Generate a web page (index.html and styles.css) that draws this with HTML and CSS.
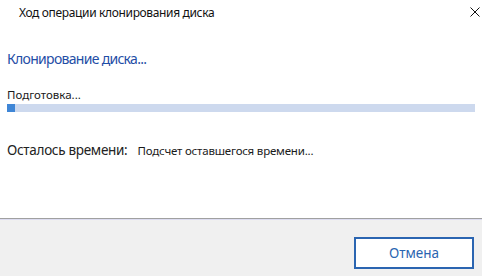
FILE: index.html
```html
<!DOCTYPE html>
<html lang="ru">
<head>
  <meta charset="UTF-8" />
  <title>Ход операции клонирования диска</title>
  <link rel="stylesheet" href="styles.css">
</head>
<body>
  <div class="dialog">
    <div class="titlebar">
      <span class="title">Ход операции клонирования диска</span>
      <span class="close">
        <svg width="10" height="10" viewBox="0 0 10 10">
          <path d="M0.5 0.5 L9.5 9.5 M9.5 0.5 L0.5 9.5" stroke="#111" stroke-width="1" fill="none"/>
        </svg>
      </span>
    </div>

    <div class="content">
      <h1 class="heading">Клонирование диска...</h1>

      <div class="stage">Подготовка...</div>
      <div class="progress">
        <div class="progress-fill" style="width: 8px"></div>
      </div>

      <div class="remaining">
        <span class="remaining-label">Осталось времени:</span>
        <span class="remaining-value">Подсчет оставшегося времени...</span>
      </div>
    </div>

    <div class="footer">
      <button class="cancel-btn">Отмена</button>
    </div>
  </div>
</body>
</html>
```

FILE: styles.css
```css
* {
  box-sizing: border-box;
  font-family: 'Noto Sans', 'Open Sans', sans-serif;
}

html, body {
  margin: 0;
  padding: 0;
  background-color: #ffffff;
}

.dialog {
  width: 482px;
  height: 276px;
  display: flex;
  flex-direction: column;
  color: #1a1a1a;
}

.titlebar {
  height: 26px;
  flex-shrink: 0;
  display: flex;
  align-items: center;
  justify-content: space-between;
  padding: 0 2px 2px 19px;
}

.title {
  font-size: 12px;
  letter-spacing: -0.35px;
  color: #111;
}

.close {
  display: flex;
  width: 10px;
  height: 10px;
}

.content {
  flex: 1;
  min-height: 0;
  padding: 0 7px;
}

.heading {
  margin: 23px 0 0 0;
  font-size: 14px;
  letter-spacing: -0.7px;
  font-weight: normal;
  line-height: 20px;
  color: #1f4ea6;
}

.stage {
  margin-top: 18px;
  font-size: 11.5px;
  line-height: 16px;
  color: #1a1a1a;
}

.progress {
  margin-top: 1px;
  height: 8px;
  width: 468px;
  background-color: #cdd9ee;
}

.progress-fill {
  height: 100%;
  background-color: #3f86d6;
}

.remaining {
  margin-top: 29px;
  display: flex;
  align-items: baseline;
  gap: 10px;
}

.remaining-label {
  font-size: 13.5px;
  letter-spacing: -0.3px;
  color: #222;
}

.remaining-value {
  font-size: 11.5px;
  letter-spacing: -0.2px;
  color: #1a1a1a;
}

.footer {
  height: 58px;
  flex-shrink: 0;
  border-top: 1px solid #a0a0a0;
  box-shadow: inset 0 1px 0 #dcdcf0;
  background-color: #f0f0f0;
  display: flex;
  justify-content: flex-end;
  align-items: flex-start;
  padding: 18px 8px 0 0;
}

.cancel-btn {
  width: 120px;
  height: 32px;
  background-color: #ffffff;
  border: 2px solid #2b65b1;
  color: #2b65b1;
  font-size: 13.5px;
  padding: 0;
  cursor: pointer;
}
```
